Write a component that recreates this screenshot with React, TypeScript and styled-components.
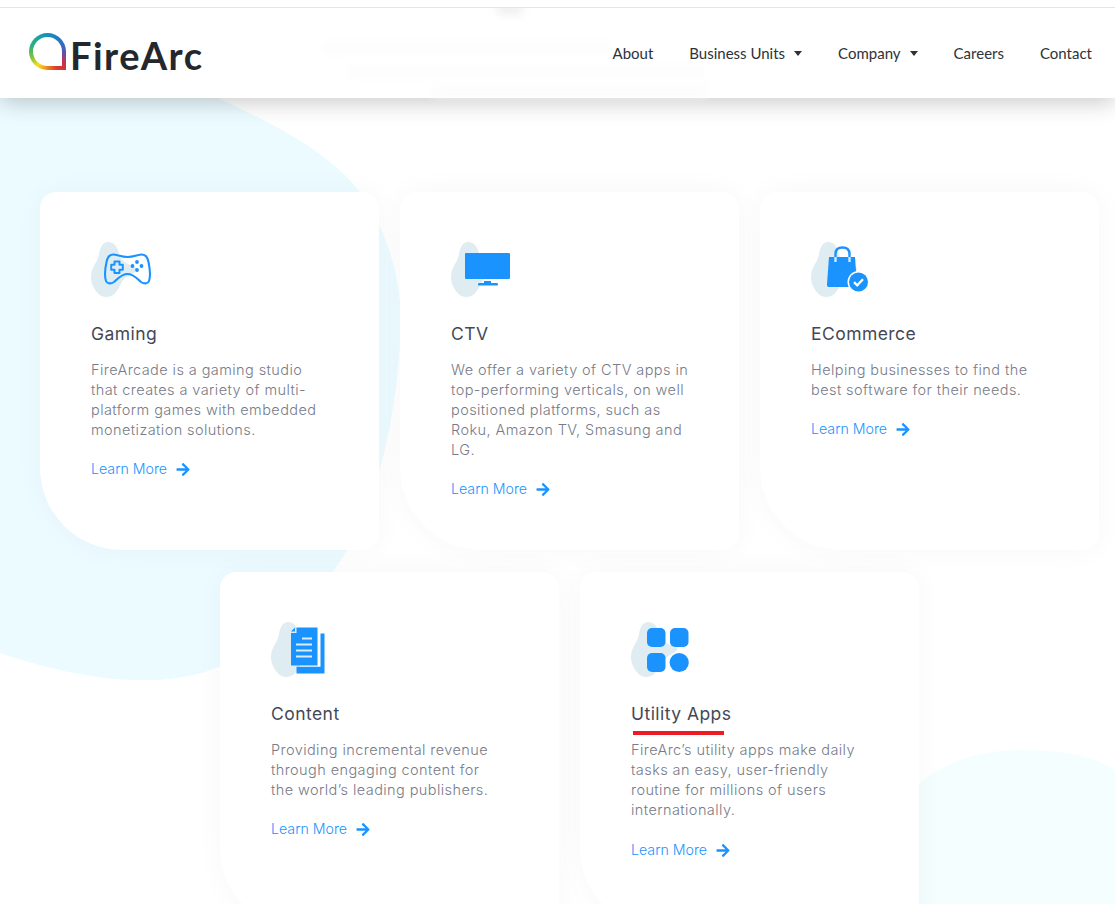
import React from "react";
import styled, { createGlobalStyle } from "styled-components";
import { FaArrowRight } from "react-icons/fa";

const Global = createGlobalStyle`
  html, body { margin: 0; padding: 0; background: #fff; overflow: hidden; }
  * { box-sizing: border-box; }
`;

const Page = styled.div`
  position: relative;
  width: 1115px;
  height: 904px;
  overflow: hidden;
  background: #fff;
`;

const Backdrop = styled.svg`
  position: absolute;
  inset: 0;
  z-index: 0;
`;

const TopStrip = styled.div`
  position: relative;
  z-index: 3;
  height: 8px;
  background: #fff;
  border-bottom: 1px solid #e4e4e4;
`;

const Header = styled.header`
  position: relative;
  z-index: 2;
  height: 90px;
  background: #fff;
  box-shadow: 0 4px 22px rgba(0, 0, 0, 0.22);
  display: flex;
  align-items: center;
  justify-content: space-between;
  padding: 0 23px 0 29px;
  overflow: visible;
`;

const Ghost = styled.span<{ $l: number; $t: number; $w: number; $h?: number; $c?: string }>`
  position: absolute;
  left: ${(p) => p.$l}px;
  top: ${(p) => p.$t}px;
  width: ${(p) => p.$w}px;
  height: ${(p) => p.$h ?? 8}px;
  background: ${(p) => p.$c ?? "#fbfbfb"};
  filter: blur(5px);
  border-radius: 4px;
`;

const Logo = styled.a`
  display: flex;
  align-items: center;
  position: relative;
  margin-top: -3px;
`;

const LogoMark = styled.span`
  position: relative;
  display: block;
  width: 37px;
  height: 37px;
  border-radius: 50% 50% 0 50%;
  background: conic-gradient(
    #1590b8 0deg,
    #2a72c2 55deg,
    #5d52ae 95deg,
    #c8324a 125deg,
    #d93a2a 150deg,
    #f0a020 190deg,
    #f5e01a 215deg,
    #7cc242 250deg,
    #2fb07a 290deg,
    #1aa0a8 330deg,
    #1590b8 360deg
  );
  &::after {
    content: "";
    position: absolute;
    inset: 4px;
    background: #fff;
    border-radius: 50% 50% 0 50%;
  }
`;

const LogoText = styled.span`
  font-family: "Lato", "Liberation Sans", sans-serif;
  font-weight: 700;
  font-size: 38px;
  line-height: 40px;
  color: #24282d;
  margin-left: 4px;
  margin-top: 7px;
  letter-spacing: 1.5px;
`;

const Nav = styled.nav`
  position: relative;
  display: flex;
  align-items: center;
  gap: 36px;
`;

const NavItem = styled.a`
  display: flex;
  align-items: center;
  font-family: "Lato", "Liberation Sans", sans-serif;
  font-size: 15px;
  line-height: 20px;
  color: #2e3238;
  white-space: nowrap;
`;

const Caret = styled.span`
  width: 0;
  height: 0;
  margin-left: 9px;
  border-left: 4.5px solid transparent;
  border-right: 4.5px solid transparent;
  border-top: 5px solid #2e3238;
`;

const Main = styled.main`
  position: relative;
  z-index: 1;
  width: 1059px;
  margin-left: 40px;
  padding-top: 94px;
  display: flex;
  flex-wrap: wrap;
  justify-content: center;
  column-gap: 21px;
  row-gap: 22px;
`;

const Card = styled.article`
  position: relative;
  width: 339px;
  height: 358px;
  flex: none;
  padding: 50px 51px 0;
  background: #fff;
  border-radius: 16px 16px 16px 82px;
  box-shadow: 0 0 30px rgba(0, 0, 0, 0.035);
`;

const IconSvg = styled.svg`
  display: block;
  width: 62px;
  height: 56px;
`;

const Title = styled.h3`
  margin: 24px 0 14px;
  font-family: "Inter", "Liberation Sans", sans-serif;
  font-weight: 400;
  font-size: 17.5px;
  line-height: 24px;
  letter-spacing: 0.45px;
  color: #434857;
`;

const Body = styled.p`
  margin: 0;
  font-family: "Inter", "Liberation Sans", sans-serif;
  font-weight: 300;
  font-size: 14.5px;
  line-height: 20px;
  letter-spacing: 0.42px;
  color: #777b88;
`;

const BodyLine = styled.span`
  display: block;
  white-space: nowrap;
`;

const More = styled.a<{ $drop?: boolean }>`
  display: flex;
  align-items: center;
  margin-top: ${(p) => (p.$drop ? 20 : 19)}px;
  font-family: "Inter", "Liberation Sans", sans-serif;
  font-weight: 300;
  font-size: 14.2px;
  line-height: 20px;
  color: #1a93ff;
  svg {
    margin-left: 9px;
    width: 14px;
    height: 15px;
  }
`;

const Annotation = styled.span`
  position: absolute;
  left: 53px;
  top: 159px;
  width: 91px;
  height: 4px;
  background: #ed1c24;
`;

const BLUE = "#1a93ff";

const Blob = () => (
  <path
    d="M17 0C23 0 27 5 28 12C29 18 36 22 46 26C48 29 40 32 33 37C28 42 27 55 15 55C7 55 0 44 0 35C0 25 7 20 8 12C9 5 12 0 17 0Z"
    fill="#dfecf2"
  />
);

const Gaming = () => (
  <IconSvg viewBox="0 0 62 56">
    <Blob />
    <path
      d="M22 12.5C26 12.5 30 15 36.5 15C43 15 47 12.5 51 12.5C55 12.5 56.5 15 57.5 20C59 27 60 33 58 39C57 42 53 42 50 40C46 37 43 32 36.5 32C30 32 27 37 23 40C20 42 16 42 15 39C13 33 14 27 15.5 20C16.5 15 18 12.5 22 12.5Z"
      fill="none"
      stroke={BLUE}
      strokeWidth="2.1"
    />
    <path
      d="M23.5 19.5h5v3.3h3.3v5h-3.3v3.3h-5v-3.3h-3.3v-5h3.3z"
      fill="none"
      stroke={BLUE}
      strokeWidth="2"
      strokeLinejoin="round"
    />
    <g fill={BLUE}>
      <circle cx="46" cy="20" r="1.9" />
      <circle cx="50.5" cy="24" r="1.9" />
      <circle cx="41.5" cy="24" r="1.9" />
      <circle cx="46" cy="28" r="1.9" />
    </g>
  </IconSvg>
);

const Monitor = () => (
  <IconSvg viewBox="0 0 62 56">
    <Blob />
    <g fill={BLUE}>
      <rect x="14" y="11" width="45" height="26" rx="1" />
      <rect x="33" y="39" width="7" height="3" />
      <rect x="27" y="41" width="20" height="2.6" rx="1.2" />
    </g>
  </IconSvg>
);

const Bag = () => (
  <IconSvg viewBox="0 0 62 56">
    <Blob />
    <path d="M18 15H44L46 42C46 44 45 45 43 45H18C16 45 16 44 16 42Z" fill={BLUE} />
    <path d="M24.5 20V12C24.5 8 27 5.5 31.5 5.5C36 5.5 38.5 8 38.5 12V20" fill="none" stroke={BLUE} strokeWidth="2.4" />
    <path d="M24.5 15V20M38.5 15V20" stroke="#d4e9fb" strokeWidth="2.4" />
    <circle cx="47.5" cy="40" r="11" fill="#fff" />
    <circle cx="47.5" cy="40" r="9.5" fill={BLUE} />
    <path d="M43 40.2L46.2 43.3L52 37.3" fill="none" stroke="#fff" strokeWidth="2.3" />
  </IconSvg>
);

const Docs = () => (
  <IconSvg viewBox="0 0 62 56">
    <Blob />
    <path d="M49.5 11.5H53.5V51.5H25.5V44.8H49.5Z" fill={BLUE} />
    <path d="M25.5 5.5H46.5V43.5H20V11H25.5Z" fill={BLUE} />
    <path d="M20 9.5L24 5.5V9.5Z" fill={BLUE} />
    <path d="M31 16.5H41M25 22.5H41M25 28.5H41M25 34.5H41" stroke="#d9ecfd" strokeWidth="2" />
  </IconSvg>
);

const Apps = () => (
  <IconSvg viewBox="0 0 62 56">
    <Blob />
    <g fill={BLUE}>
      <rect x="16" y="6" width="18.5" height="19" rx="5" />
      <rect x="39" y="6" width="18.5" height="19" rx="5" />
      <rect x="16" y="31" width="18.5" height="19" rx="5" />
      <circle cx="48.2" cy="40.5" r="9.6" />
    </g>
  </IconSvg>
);

const cards = [
  {
    icon: <Gaming />,
    title: "Gaming",
    body: [
      "FireArcade is a gaming studio",
      "that creates a variety of multi-",
      "platform games with embedded",
      "monetization solutions.",
    ],
  },
  {
    icon: <Monitor />,
    title: "CTV",
    body: [
      "We offer a variety of CTV apps in",
      "top-performing verticals, on well",
      "positioned platforms, such as",
      "Roku, Amazon TV, Smasung and",
      "LG.",
    ],
  },
  {
    icon: <Bag />,
    title: "ECommerce",
    body: ["Helping businesses to find the", "best software for their needs."],
  },
  {
    icon: <Docs />,
    title: "Content",
    body: ["Providing incremental revenue", "through engaging content for", "the world’s leading publishers."],
  },
  {
    icon: <Apps />,
    title: "Utility Apps",
    body: [
      "FireArc’s utility apps make daily",
      "tasks an easy, user-friendly",
      "routine for millions of users",
      "internationally.",
    ],
    marked: true,
  },
];

export default function App() {
  return (
    <Page>
      <Global />
      <Backdrop width="1115" height="904" viewBox="0 0 1115 904">
        <path
          d="M0 90H200C262 118 330 150 362 195C392 240 404 290 400 340C396 420 376 505 346 552C310 610 260 655 205 672C150 688 80 680 0 653Z"
          fill="#ebfbff"
        />
        <path d="M900 804C930 765 975 750 1020 750C1060 750 1095 756 1115 770V904H900Z" fill="#f5feff" />
      </Backdrop>
      <TopStrip />
      <Header>
        <Ghost $l={497} $t={-6} $w={26} $h={12} $c="#eeeeee" />
        <Ghost $l={320} $t={36} $w={290} />
        <Ghost $l={345} $t={60} $w={360} />
        <Ghost $l={430} $t={80} $w={280} />
        <Logo>
          <LogoMark />
          <LogoText>FireArc</LogoText>
        </Logo>
        <Nav>
          <NavItem>About</NavItem>
          <NavItem>
            Business Units
            <Caret />
          </NavItem>
          <NavItem>
            Company
            <Caret />
          </NavItem>
          <NavItem>Careers</NavItem>
          <NavItem>Contact</NavItem>
        </Nav>
      </Header>
      <Main>
        {cards.map((c) => (
          <Card key={c.title}>
            {c.icon}
            <Title>{c.title}</Title>
            {c.marked && <Annotation />}
            <Body>
              {c.body.map((line) => (
                <BodyLine key={line}>{line}</BodyLine>
              ))}
            </Body>
            <More $drop={c.marked}>
              Learn More
              <FaArrowRight />
            </More>
          </Card>
        ))}
      </Main>
    </Page>
  );
}
